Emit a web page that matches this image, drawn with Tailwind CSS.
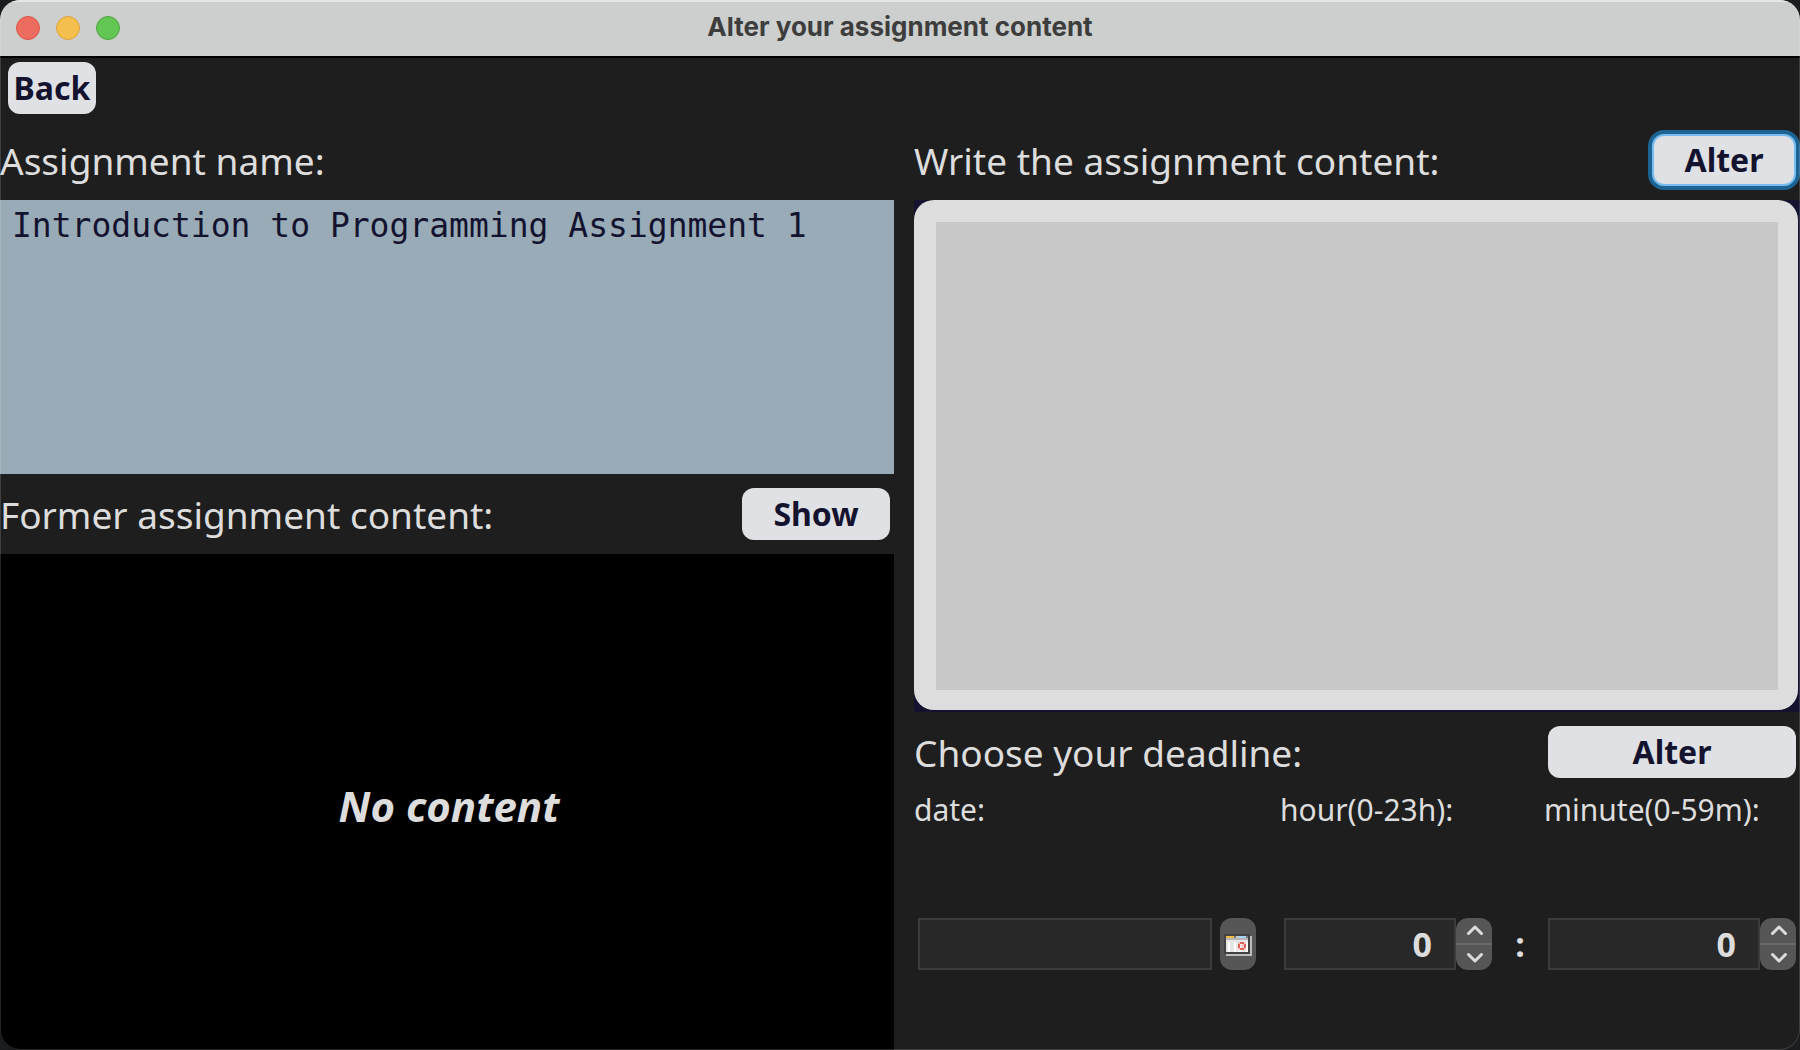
<!DOCTYPE html>
<html lang="en">
<head>
<meta charset="utf-8">
<meta name="viewport" content="width=device-width, initial-scale=1">
<title>Alter your assignment content</title>
<script src="https://cdn.jsdelivr.net/npm/@tailwindcss/browser@4"></script>
</head>
<body class="bg-[#1b1c20] font-['Noto_Sans',sans-serif] text-[#dddddd]">
<div class="relative flex min-h-screen flex-col overflow-hidden rounded-[20px] bg-[#1e1e1e]">

  <!-- Title bar -->
  <header class="grid h-[58px] grid-cols-[1fr_auto_1fr] items-center border-t-2 border-b-2 border-t-[#e4e5e4] border-b-black bg-[#cdcfce] px-4 pb-0.5">
    <div class="flex gap-4">
      <button type="button" aria-label="Close" class="size-6 rounded-full border border-[#d9574b] bg-[#ed6b5f]"></button>
      <button type="button" aria-label="Minimize" class="size-6 rounded-full border border-[#d9a23f] bg-[#f5bf4f]"></button>
      <button type="button" aria-label="Zoom" class="size-6 rounded-full border border-[#4fa73f] bg-[#62c655]"></button>
    </div>
    <h1 class="pb-0.5 font-['Inter',sans-serif] text-[26px] leading-8 font-bold text-[#3d3d3d]">Alter your assignment content</h1>
  </header>

  <nav class="px-2 pt-1 pb-1.5">
    <button type="button" class="block h-[52px] w-[88px] rounded-xl bg-[#e0e1e5] text-[32px] leading-[52px] font-bold text-[#13132f]">Back</button>
  </nav>

  <main class="grid flex-1 grid-cols-[894fr_886fr] gap-5">
    <section class="flex min-w-0 flex-col">
      <div class="flex h-20 items-center">
        <label for="name" class="pt-0.5 text-[37px] leading-[48px]">Assignment name:</label>
      </div>
      <textarea id="name" class="block h-[274px] w-full resize-none bg-[#98abb6] px-3 py-1.5 font-['DejaVu_Sans_Mono',monospace] text-[33px] leading-10 text-[#13132f] outline-none">Introduction to Programming Assignment 1</textarea>
      <div class="flex h-20 items-center justify-between pr-1">
        <h2 class="pt-0.5 text-[37px] leading-[48px]">Former assignment content:</h2>
        <button type="button" class="h-[52px] w-[148px] rounded-xl bg-[#e0e1e5] text-[32px] leading-[52px] font-bold text-[#13132f]">Show</button>
      </div>
      <div class="flex flex-1 items-center justify-center bg-black pt-2 pl-1">
        <p class="text-[42px] leading-[56px] font-bold italic">No content</p>
      </div>
    </section>

    <section class="flex min-w-0 flex-col">
      <div class="flex h-20 items-center justify-between pr-1">
        <label for="content" class="pt-0.5 text-[37px] leading-[48px]">Write the assignment content:</label>
        <button type="button" class="h-[52px] w-[144px] rounded-xl border-2 border-[#78bdf0] bg-[#e0e1e5] text-[32px] leading-[48px] font-bold text-[#13132f] ring-4 ring-[#1d6393]">Alter</button>
      </div>
      <div class="h-[512px] bg-[#13132f] pr-0.5 pb-0.5">
        <div class="h-full rounded-[20px] bg-[#dddddd] pt-[22px] pr-5 pb-5 pl-[22px]">
          <textarea id="content" class="block h-full w-full resize-none bg-[#c8c8c8] px-3 py-1 text-[33px] leading-10 text-[#13132f] outline-none"></textarea>
        </div>
      </div>
      <div class="flex h-20 items-center justify-between pr-1">
        <h2 class="pt-0.5 text-[37px] leading-[48px]">Choose your deadline:</h2>
        <button type="button" class="h-[52px] w-[248px] rounded-xl bg-[#e0e1e5] text-[32px] leading-[52px] font-bold text-[#13132f]">Alter</button>
      </div>

      <div class="grid flex-1 grid-cols-[minmax(0,366fr)_minmax(0,264fr)_minmax(0,256fr)] grid-rows-[36px_1fr] gap-y-2.5 text-[30px] leading-9">
        <label for="date">date:</label>
        <label for="hour">hour(0-23h):</label>
        <label for="minute">minute(0-59m):</label>

        <div class="flex items-center gap-2 pr-6 pl-1">
          <input id="date" type="text" class="h-[52px] min-w-0 flex-1 border-2 border-[#3c3c3c] bg-[#282828] px-3 outline-none">
          <button type="button" aria-label="Pick a date" class="h-[52px] w-9 rounded-xl bg-[#565656]">
            <svg class="block" width="36" height="52" viewBox="0 0 36 52" shape-rendering="crispEdges" aria-hidden="true">
              <path fill="#bdbdbd" d="M6 18h26v20H6z"/>
              <path fill="#424242" d="M4 16h26v20H4z"/>
              <path fill="#f4b942" d="M6 18h8v2H6z"/>
              <path fill="#777" d="M14 18h2v2h-2zM26 18h2v2h-2z"/>
              <path fill="#c8c8c8" d="M16 18h2v2h-2z"/>
              <path fill="#a9d1f2" d="M18 18h8v2h-8z"/>
              <path fill="#b8b8b8" d="M6 20h22v2H6z"/>
              <path fill="#e6e6e6" d="M6 22h22v12H6z"/>
              <path fill="#fff" d="M8 24h2v10H8zM14 24h2v10h-2zM18 32h4v2h-4zM26 24h2v10h-2z"/>
              <path fill="#f3c6c4" d="M18 24h8v8h-8z"/>
              <path fill="#e4605c" d="M20 24h4v2h-4zM18 26h2v4h-2zM24 26h2v4h-2zM20 30h4v2h-4z"/>
              <path fill="#f5e9e9" d="M20 26h2v4h-2z"/>
            </svg>
          </button>
        </div>

        <div class="flex items-center pl-1">
          <input id="hour" type="number" min="0" max="23" value="0" class="h-[52px] min-w-0 flex-1 [appearance:textfield] border-2 border-[#3c3c3c] bg-[#282828] pr-[22px] text-right text-[34px] leading-[48px] font-bold outline-none [&::-webkit-inner-spin-button]:appearance-none">
          <div class="flex h-[52px] w-9 flex-col overflow-hidden rounded-xl bg-[#565656]">
            <button type="button" aria-label="Hour up" class="h-[26px] border-b border-[#6a6a6a]"><svg class="block" width="36" height="25" fill="none" stroke="#dddddd" stroke-width="3" stroke-linecap="round" stroke-linejoin="round" aria-hidden="true"><path d="M12.5 15.5 19 9l6.500 6.500"/></svg></button>
            <button type="button" aria-label="Hour down" class="h-[26px] border-t border-[#6a6a6a]"><svg class="block" width="36" height="25" fill="none" stroke="#dddddd" stroke-width="3" stroke-linecap="round" stroke-linejoin="round" aria-hidden="true"><path d="M12.500 9.500 19 16l6.500-6.500"/></svg></button>
          </div>
          <span class="w-[52px] pl-1 text-center text-[34px] leading-[52px] font-bold">:</span>
        </div>

        <div class="flex items-center pr-1 pl-1">
          <input id="minute" type="number" min="0" max="59" value="0" class="h-[52px] min-w-0 flex-1 [appearance:textfield] border-2 border-[#3c3c3c] bg-[#282828] pr-[22px] text-right text-[34px] leading-[48px] font-bold outline-none [&::-webkit-inner-spin-button]:appearance-none">
          <div class="flex h-[52px] w-9 flex-col overflow-hidden rounded-xl bg-[#565656]">
            <button type="button" aria-label="Minute up" class="h-[26px] border-b border-[#6a6a6a]"><svg class="block" width="36" height="25" fill="none" stroke="#dddddd" stroke-width="3" stroke-linecap="round" stroke-linejoin="round" aria-hidden="true"><path d="M12.5 15.5 19 9l6.500 6.500"/></svg></button>
            <button type="button" aria-label="Minute down" class="h-[26px] border-t border-[#6a6a6a]"><svg class="block" width="36" height="25" fill="none" stroke="#dddddd" stroke-width="3" stroke-linecap="round" stroke-linejoin="round" aria-hidden="true"><path d="M12.500 9.500 19 16l6.500-6.500"/></svg></button>
          </div>
        </div>
      </div>
    </section>
  </main>

  <!-- Hairline along the window edge -->
  <div class="pointer-events-none absolute inset-0 rounded-[20px] border border-t-0 border-white/15"></div>
</div>
</body>
</html>
